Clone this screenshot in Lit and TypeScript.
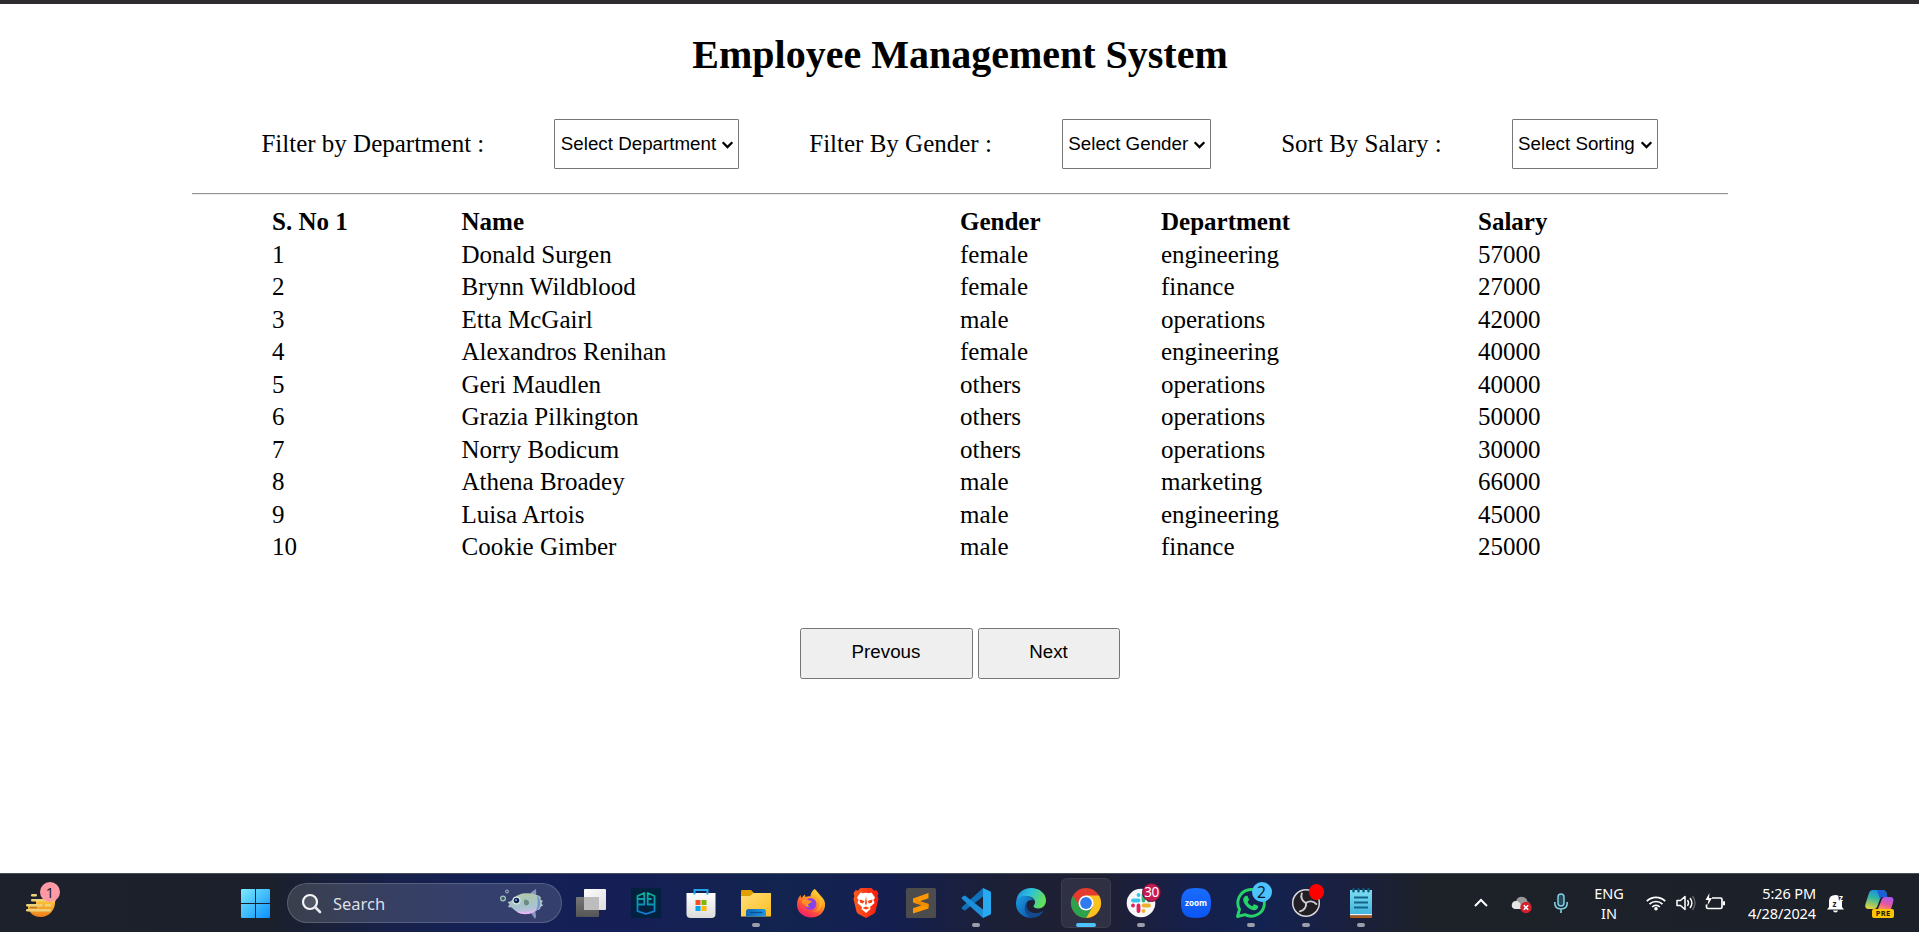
import { LitElement, html, svg, css, nothing, TemplateResult } from "lit";
import { customElement, property } from "lit/decorators.js";
import { classMap } from "lit/directives/class-map.js";

type Employee = [number, string, string, string, number];

const employees: Employee[] = [
  [1, "Donald Surgen", "female", "engineering", 57000],
  [2, "Brynn Wildblood", "female", "finance", 27000],
  [3, "Etta McGairl", "male", "operations", 42000],
  [4, "Alexandros Renihan", "female", "engineering", 40000],
  [5, "Geri Maudlen", "others", "operations", 40000],
  [6, "Grazia Pilkington", "others", "operations", 50000],
  [7, "Norry Bodicum", "others", "operations", 30000],
  [8, "Athena Broadey", "male", "marketing", 66000],
  [9, "Luisa Artois", "male", "engineering", 45000],
  [10, "Cookie Gimber", "male", "finance", 25000],
];

const icon = (content: TemplateResult, size = 30) =>
  html`<svg width=${size} height=${size} viewBox="0 0 ${size} ${size}">${content}</svg>`;

const icons = {
  taskView: svg`
    <defs><linearGradient id="tv" x2="0" y2="1"><stop stop-color="#777"/><stop offset="1" stop-color="#555"/></linearGradient>
    <linearGradient id="tw" x2="1" y2="1"><stop stop-color="#fff"/><stop offset="1" stop-color="#ddd"/></linearGradient></defs>
    <rect x="0" y="9" width="23" height="20" rx="1" fill="url(#tv)"/>
    <rect x="8" y="1" width="22" height="21" rx="1" fill="url(#tw)"/>
    <rect x="8" y="9" width="15" height="13" fill="#bdbdbd"/>`,
  pg: svg`
    <defs><linearGradient id="pg" gradientUnits="userSpaceOnUse" x1="0" y1="4" x2="0" y2="26"><stop stop-color="#0fb58f"/><stop offset=".55" stop-color="#0a94b4"/><stop offset="1" stop-color="#1279d8"/></linearGradient></defs>
    <rect width="30" height="30" fill="#02213f"/>
    <path d="M6.500 16.500V8L13.300 5v11.500H6.500v6.700L15 26l8.500-2.800V8L16.700 5v11.500h6.500M6.500 11h6.800M16.700 11h4" fill="none" stroke="url(#pg)" stroke-width="1.800" stroke-linejoin="round"/>`,
  store: svg`
    <defs><linearGradient id="st" x2="0" y2="1"><stop stop-color="#fff"/><stop offset="1" stop-color="#dcdcdc"/></linearGradient></defs>
    <path d="M.5 5h29v21q0 4-4 4h-21q-4 0-4-4z" fill="url(#st)"/>
    <path d="M8.500 6.500V2h13v4.500" fill="none" stroke="#22a5ea" stroke-width="2"/>
    <path d="M9.500 12H14.500V17H9.500z" fill="#f25022"/><path d="M15.500 12H20.500V17H15.500z" fill="#7fba00"/>
    <path d="M9.500 18H14.500V23H9.500z" fill="#00a4ef"/><path d="M15.500 18H20.500V23H15.500z" fill="#ffb900"/>`,
  folder: svg`
    <defs><linearGradient id="fo" x2="1" y2="1"><stop stop-color="#ffe07a"/><stop offset="1" stop-color="#fdbd22"/></linearGradient>
    <linearGradient id="fb" x2="1" y2="0"><stop stop-color="#0f66b8"/><stop offset="1" stop-color="#1e9be6"/></linearGradient></defs>
    <path d="M0 3q0-1 1-1h9l3 3v6H0z" fill="#e0a000"/>
    <path d="M0 8h9l3.500-3H30v23.500H0z" fill="url(#fo)"/>
    <path d="M5 28.500v-5q0-2.500 2.500-2.500h15q2.500 0 2.500 2.500v5z" fill="url(#fb)"/>
    <path d="M9 24.500H21.500" stroke="#0a4f92" stroke-width="1.300"/>`,
  firefox: svg`
    <defs><linearGradient id="ff" x1=".8" y1="0" x2=".2" y2="1"><stop stop-color="#ffe23c"/><stop offset=".4" stop-color="#ff9a22"/><stop offset=".7" stop-color="#ff4a3d"/><stop offset="1" stop-color="#ee1478"/></linearGradient>
    <radialGradient id="fp"><stop stop-color="#6b4bea"/><stop offset="1" stop-color="#a13be0"/></radialGradient></defs>
    <path d="M18.500 1c2 1 3.500 4 5.500 6 4 3.500 5.500 7 5 11-1 7-6.500 11.500-14 11.500C7 29.500 1 24 1 16.500c0-3 1-6.500 3.500-9.500l.8 3 3.400-3.500.8 2.600c1.500-.8 3.500-1 5-.6 0-3 1.500-5.500 4-7.500z" fill="url(#ff)"/>
    <circle cx="14.500" cy="16" r="6" fill="url(#fp)"/>
    <path d="M6 12c3-2 6-1 7 .5l3 .6c-.4 1.900-2.500 2-3.500 3-.6.800-.5 2 .8 2.600-2 .8-4-.2-5-2.200L6 15z" fill="#ff9127"/>
    <path d="M18 2c3 5 7 8 6 14-.5 4-3 7-7 8 9 0 11-11 6-16z" fill="#ffce31" opacity=".65"/>`,
  brave: svg`
    <defs><linearGradient id="br" x2="1" y2="0"><stop stop-color="#ff5a1f"/><stop offset="1" stop-color="#f51b0e"/></linearGradient></defs>
    <path d="M9.500 0h11l2.500 2.500 2.500-.3 2 3-.9 2.800.9 3-3 12.500q-.5 1.500-2 2.500L15 30l-7.500-4q-1.500-1-2-2.500L2.500 11l.9-3-.9-2.800 2-3 2.500.3z" fill="url(#br)"/>
    <path d="M9.500 4.500l2.500.7 3-.4 3 .4 2.500-.7 3.500 5-1.500 2.500 1 3-4.500 4 .5 2L15 25l-4.500-4 .5-2-4.500-4 1-3L6 9.500z" fill="#fff"/>
    <path d="M8.500 11.500l5 1.500-1.500 2.500-3-1zM21.500 11.500l-5 1.500 1.500 2.500 3-1zM15 8l1 7-1 2.500L14 15zM11.500 20l3.500-1.500 3.500 1.500-3.500 1.500z" fill="#f9400f"/>`,
  sublime: svg`
    <rect width="30" height="30" rx="1.500" fill="#4c4c4c"/>
    <path d="M7 10.500L22.500 5v5.200l-8.700 3.100 8.700 2.700v4.500L7 25.500v-5.200l8.700-3.100L7 14.500z" fill="#ff9800"/>
    <path d="M7 14.500l6.800-1.200 8.700 2.700v3.200z" fill="#ef8c00"/>`,
  vscode: svg`
    <path d="M22 0v8.500L4 22.500.8 21v-1.700z" fill="#0f72bb"/>
    <path d="M22 30v-8.500L4 7.500.8 9v1.700z" fill="#1d8fd8"/>
    <path d="M22 0l7 3.200c.6.300 1 .8 1 1.500v20.600c0 .7-.4 1.200-1 1.500L22 30z" fill="#29aaf0"/>`,
  edge: svg`
    <defs><linearGradient id="ea" x2="1" y2=".3"><stop stop-color="#1c8edb"/><stop offset=".5" stop-color="#2cc1dc"/><stop offset="1" stop-color="#64df5c"/></linearGradient>
    <linearGradient id="eb" x2="1" y2="1"><stop stop-color="#1b9de2"/><stop offset="1" stop-color="#0c4fa8"/></linearGradient></defs>
    <path d="M.3 13C1 5 7.500 0 15 0c8.500 0 15 5.500 15 12.500 0 5-3.500 8-7.800 8-3.200 0-4.700-1.200-4.700-2.200 0-1 1.500-1.500 1.500-4C19 11 16 8.500 11.500 8.500 6 8.500 2 11 .3 13z" fill="url(#ea)"/>
    <path d="M.3 13C2 9.500 6 7.500 10.500 8.300c3.500.6 6 2 7.500 4.200-5-2-9 2-8.500 7 .5 4.500 3.500 8 7.500 10C8 31 0 24.500 0 15.500 0 14.500.1 14 .3 13z" fill="url(#eb)"/>
    <path d="M11.500 14.500C9 19 12 24.500 18 25c4 .3 7-.8 9.500-2.600C26 26 22.500 29 18.500 29.600 12 30 8.500 25 8.700 20c.1-2.500 1.200-4.500 2.800-5.500z" fill="#124a8d"/>`,
  chrome: svg`
    <circle cx="15" cy="15" r="15" fill="#e33b2e"/>
    <path d="M15 7.500H28A15 15 0 0 1 15 30l6.500-11.250z" fill="#fcc31e"/>
    <path d="M8.500 18.750L2 7.500A15 15 0 0 0 15 30l6.500-11.250z" fill="#2ba24c"/>
    <circle cx="15" cy="15" r="7.500" fill="#fff"/><circle cx="15" cy="15" r="5.900" fill="#2f7bee"/>`,
  slack: svg`
    <circle cx="15" cy="15" r="14.300" fill="#f8f8f8"/>
    <g stroke-width="3.800" stroke-linecap="round" fill="none">
    <path d="M12.500 7v.01M7 12.500h5.500" stroke="#36c5f0"/><path d="M17.500 7v5.500M23 12.500v.01" stroke="#2eb67d"/>
    <path d="M17.500 17.500H23M17.500 23v.01" stroke="#ecb22e"/><path d="M12.500 17.500V23M7 17.500v.01" stroke="#e01e5a"/></g>`,
  zoom: svg`
    <defs><linearGradient id="zo" x2="0" y2="1"><stop stop-color="#1a6cff"/><stop offset="1" stop-color="#0b55f2"/></linearGradient></defs>
    <path d="M15 0C26 0 30 4 30 15s-4 15-15 15S0 26 0 15 4 0 15 0z" fill="url(#zo)"/>
    <text x="15" y="17.500" text-anchor="middle" class="zoom-word" textLength="22" lengthAdjust="spacingAndGlyphs">zoom</text>`,
  whatsapp: svg`
    <path d="M1.500 28.500l2-7.200A13.300 13.300 0 1 1 8.900 26.600z" fill="none" stroke="#25d366" stroke-width="2.900" stroke-linejoin="round"/>
    <path d="M10.600 7.800c.8 0 1 .2 1.300 1l1 2.400c.2.600 0 1-.4 1.500l-.9 1.200c1 2 2.600 3.400 4.700 4.300l1.300-1.500c.4-.5.8-.5 1.300-.3l2.500 1.200c.6.300.8.500.8 1 0 2-1.700 3.700-4 3.700-4.500 0-11-6-11-10.600 0-2.200 1.700-3.900 3.400-3.900z" fill="#25d366"/>`,
  obs: svg`
    <circle cx="15" cy="15" r="13.300" fill="#211f23" stroke="#d8d8da" stroke-width="1.500"/>
    <g fill="none" stroke="#cfcdd2" stroke-width="1.900" stroke-linecap="round">
    <path id="blade" d="M15 15C11.300 13.500 9.300 9.500 10.800 5.500"/>
    <path d="M15 15C11.300 13.500 9.300 9.500 10.800 5.500" transform="rotate(120 15 15)"/>
    <path d="M15 15C11.300 13.500 9.300 9.500 10.800 5.500" transform="rotate(240 15 15)"/></g>`,
  notepad: svg`
    <defs><linearGradient id="no" x2="0" y2="1"><stop stop-color="#7fdcf0"/><stop offset="1" stop-color="#3fb4dc"/></linearGradient></defs>
    <path d="M4 2h22v25H4z" fill="url(#no)"/><path d="M4 26h22v1.500H4z" fill="#f2f2f2"/><path d="M4 27.500h22V29q0 1-1 1H5q-1 0-1-1z" fill="#a75a1c"/>
    <path d="M7.500 1.300v2M12.500 1.300v2M17.500 1.300v2M22.500 1.300v2" stroke="#0d5a80" stroke-width="2.500" stroke-linecap="round"/>
    <path d="M8 9.500h14M8 14.500h14M8 19.500h14" stroke="#136488" stroke-width="1.900"/>`,
};

interface AppEntry { art: TemplateResult; state?: "open" | "active"; badge?: string; badgeClass?: string; }

const apps: AppEntry[] = [
  { art: icons.taskView },
  { art: icons.pg },
  { art: icons.store },
  { art: icons.folder, state: "open" },
  { art: icons.firefox },
  { art: icons.brave },
  { art: icons.sublime },
  { art: icons.vscode, state: "open" },
  { art: icons.edge },
  { art: icons.chrome, state: "active" },
  { art: icons.slack, state: "open", badge: "30", badgeClass: "crimson" },
  { art: icons.zoom },
  { art: icons.whatsapp, state: "open", badge: "2", badgeClass: "blue" },
  { art: icons.obs, state: "open", badge: "", badgeClass: "red" },
  { art: icons.notepad, state: "open" },
];

@customElement("filter-select")
class FilterSelect extends LitElement {
  @property() label = "";
  static styles = css`
    :host { display: block; position: relative; height: 50px; }
    select {
      appearance: none; display: block; box-sizing: border-box; width: 100%; height: 50px; margin: 0;
      padding: 0 0 1px 5.500px; border: 1px solid #767676; border-radius: 1px; background: #fff; color: #000;
      font: 18.75px "Liberation Sans", Arial, sans-serif;
    }
    svg { position: absolute; right: 5px; top: 21px; pointer-events: none; }
  `;
  render() {
    return html`<select><option>${this.label}</option></select>
      <svg width="13" height="10" viewBox="0 0 13 10"><path d="M1.700 2.200l4.800 4.900 4.800-4.900" fill="none" stroke="#000" stroke-width="2.200"/></svg>`;
  }
}

@customElement("employee-page")
class EmployeePage extends LitElement {
  static styles = css`
    :host { display: block; box-sizing: border-box; border-top: 4px solid #2f2c2f; padding-top: 27px;
      background: #fff; color: #000; font: 25px "Liberation Serif", "Times New Roman", serif; }
    h1 { margin: 0; padding-left: 1px; font-size: 40px; line-height: 48px; text-align: center; }
    .filters { display: flex; justify-content: space-evenly; align-items: center; width: 1536px; margin: 40px auto 0; height: 50px; }
    .filters span { line-height: 30px; white-space: nowrap; }
    .filters span:first-child { width: 223px; }
    .department { width: 185px; }
    .gender { width: 149.500px; }
    .sorting { width: 146px; }
    hr { width: 1536px; box-sizing: border-box; height: 2px; border: 0; border-top: 1px solid #949494; border-bottom: 1px solid #ececec; margin: 24px auto 0; }
    table { table-layout: fixed; border-collapse: collapse; width: 1376px; margin: 11px 0 0 272px; }
    th, td { padding: 0; height: 32.500px; line-height: 32px; text-align: left; vertical-align: top; }
    .c1 { width: 189.500px; } .c2 { width: 498.500px; } .c3 { width: 201px; } .c4 { width: 317px; } .c5 { width: 170px; }
    .pager { display: flex; justify-content: center; gap: 5px; margin-top: 64px; }
    button { box-sizing: border-box; height: 51px; padding: 0 0 2px; border: 1px solid #767676; border-radius: 2.500px;
      background: #efefef; color: #000; font: 18.75px "Liberation Sans", Arial, sans-serif; }
    .prev { width: 173px; } .next { width: 142px; }
  `;
  render() {
    return html`
      <h1>Employee Management System</h1>
      <div class="filters">
        <span>Filter by Department :</span><filter-select class="department" label="Select Department"></filter-select>
        <span>Filter By Gender :</span><filter-select class="gender" label="Select Gender"></filter-select>
        <span>Sort By Salary :</span><filter-select class="sorting" label="Select Sorting"></filter-select>
      </div>
      <hr />
      <table>
        <thead><tr><th class="c1">S. No 1</th><th class="c2">Name</th><th class="c3">Gender</th><th class="c4">Department</th><th class="c5">Salary</th></tr></thead>
        <tbody>${employees.map((row) => html`<tr>${row.map((cell) => html`<td>${cell}</td>`)}</tr>`)}</tbody>
      </table>
      <div class="pager"><button class="prev">Prevous</button><button class="next">Next</button></div>`;
  }
}

@customElement("task-bar")
class TaskBar extends LitElement {
  static styles = css`
    :host { display: flex; box-sizing: border-box; height: 59px; border-top: 1px solid #44505a; color: #fff;
      font-family: "Noto Sans", "Open Sans", sans-serif;
      background: linear-gradient(90deg, #1c212b 0, #1b202c 270px, #17214a 390px, #132057 500px, #161f55 640px, #12244f 780px, #141f52 880px, #1c2036 1000px, #1f1f33 1100px, #16204a 1190px, #122250 1260px, #1a2040 1340px, #1d2128 1430px, #1c2029 100%); }
    svg { display: block; overflow: visible; }
    .widget { position: relative; width: 215px; padding: 13px 0 0 26px; }
    .start { width: 30px; padding-top: 15px; }
    .search { display: flex; align-items: center; box-sizing: border-box; width: 275px; height: 40px; margin: 9px 0 0 16px;
      padding: 0 12px 0 14px; border: 1px solid rgba(255,255,255,.17); border-radius: 20px; background: rgba(255,255,255,.14);
      font-size: 16.500px; color: #dedfe6; }
    .search span { margin-left: 12px; flex: 1; line-height: 24px; padding-top: 1px; }
    .apps { display: flex; margin-left: 1.500px; }
    .app { position: relative; display: flex; justify-content: center; box-sizing: border-box; width: 55px; padding-top: 14px; height: 58px; }
    .app.active::before { content: ""; position: absolute; left: 2.500px; top: 4px; box-sizing: border-box; width: 50px; height: 50px; border-radius: 6px;
      background: rgba(255,255,255,.08); border: 1px solid rgba(255,255,255,.06); }
    .app svg { position: relative; }
    .app.open::after, .app.active::after { content: ""; position: absolute; bottom: 5px; width: 8px; height: 4px; border-radius: 2px; background: #9b9daa; }
    .app.active::after { width: 20px; background: #4cc2ff; }
    .badge { position: absolute; box-sizing: border-box; border-radius: 50%; text-align: center; }
    .crimson { left: 28.500px; top: 9px; width: 19px; height: 19px; background: #c71a53; border: 1px solid #641337; color: #fff; font-size: 13.500px; line-height: 17px; letter-spacing: -.5px; }
    .blue { left: 28px; top: 8px; width: 20px; height: 20px; background: #4cc2ff; color: #0b1a26; font-size: 15.500px; line-height: 20px; }
    .red { left: 30px; top: 10px; width: 15.500px; height: 15.500px; background: #f00; }
    .pink { left: 40px; top: 8px; width: 20px; height: 20px; background: #ff99a4; color: #1d1d24; font-size: 14.500px; line-height: 20px; }
    .zoom-word { fill: #fff; font: 700 8.500px "Open Sans", sans-serif; }
    .tray { display: grid; grid-template-columns: 40px 39px 41px 56px 38px 21px 38px 82px 39px 50px; margin-left: 72.500px; justify-items: center; align-items: center; height: 58px; }
    .tray div { font-size: 14.500px; line-height: 20px; text-align: center; white-space: nowrap; }
    .tray .clock { justify-self: end; text-align: right; font-size: 14.500px; letter-spacing: -.1px; }
    .pre { font: 700 7.500px "Noto Sans", sans-serif; fill: #211a00; letter-spacing: .3px; }
    .zz { font: 700 8px "Noto Sans", sans-serif; }
  `;

  private app(a: AppEntry) {
    return html`<div class=${classMap({ app: true, open: a.state === "open", active: a.state === "active" })}>
      ${icon(a.art)}${a.badge === undefined ? nothing : html`<span class="badge ${a.badgeClass}">${a.badge}</span>`}
    </div>`;
  }

  render() {
    return html`
      <div class="widget">
        ${icon(svg`
          <defs><linearGradient id="su" x2="0" y2="1"><stop stop-color="#ffc83a"/><stop offset="1" stop-color="#ee7d1c"/></linearGradient></defs>
          <path d="M10 13H29C30 23 23 30 14.500 30 9 30 4.500 27 2 22V19H10z" fill="url(#su)"/>
          <path d="M6.200 8.300H9.800M6.200 13.300H28.500M1.200 18.300H15.500M20 18.300H24M1.200 23.300H23.800" stroke="#edd27a" stroke-width="2.500" stroke-linecap="round"/>
          <path d="M4 20.500h7" stroke="#a9782e" stroke-width="1.300"/>`)}
        <span class="badge pink">1</span>
      </div>
      <div class="start">
        ${icon(svg`
          <defs><linearGradient id="wi" gradientUnits="userSpaceOnUse" x1="0" y1="0" x2="29" y2="29"><stop stop-color="#7bebff"/><stop offset="1" stop-color="#0a8ffb"/></linearGradient></defs>
          <path d="M0 1q0-1 1-1H14V14H0zM15 0h13q1 0 1 1V14H15zM0 15H14V29H1q-1 0-1-1zM15 15H29v13q0 1-1 1H15z" fill="url(#wi)"/>`)}
      </div>
      <div class="search">
        ${icon(svg`<circle cx="8" cy="8" r="7" fill="rgba(255,255,255,.12)" stroke="#f4f4f7" stroke-width="2.200"/><path d="M13 13l5 5" stroke="#e8e8ee" stroke-width="2.600" stroke-linecap="round"/>`, 19)}
        <span>Search</span>
        <svg width="50" height="34" viewBox="0 0 50 34">
          <defs><linearGradient id="fi" x2=".2" y2="1"><stop stop-color="#b3c8a6"/><stop offset=".7" stop-color="#a6c3cd"/><stop offset="1" stop-color="#c5bce6"/></linearGradient></defs>
          <path d="M30 9q3-4 7-6 1 4-1 8zM32 27l4 6q2-3 0-8z" fill="#8797bd"/>
          <path d="M8.500 16q4-.5 5.500-3c4-5 11-6.500 17-5.500 6 .5 9 2 11 4l-.5 2 2.500 1.500-1.500 2 1.500 2.500-2.500 1.500q0 2.500-3 3c-5 4-12 5-18 3-4-1.500-6-4-8-5.500L9 21l1.500-2.700z" fill="url(#fi)"/>
          <path d="M38 10q3 1 3 7t-4 8q3-7 1-15z" fill="#7093cc"/>
          <path d="M19 26q8 3 15-.5" stroke="#ecb5f3" stroke-width="1.500" fill="none"/>
          <circle cx="17.500" cy="14.500" r="4" fill="#d5e9e9"/><circle cx="17.500" cy="14.500" r="2.800" fill="#172247"/><circle cx="17" cy="14" r="1" fill="#5ab2e8"/>
          <path d="M25.500 13.500q5 0 4.500 4-2 3-4 1.500-2-1.500-.5-5.500z" fill="#6a8a82"/>
          <circle cx="4" cy="12.500" r="2.400" fill="#4c5a6c" stroke="#9fc5bd" stroke-width="1.200"/><circle cx="8" cy="5.500" r="1.500" fill="#4c5a6c" stroke="#9fb5c8"/>
        </svg>
      </div>
      <div class="apps">${apps.map((a) => this.app(a))}</div>
      <div class="tray">
        ${icon(svg`<path d="M4 13l6-6 6 6" fill="none" stroke="#fff" stroke-width="2"/>`, 20)}
        ${icon(svg`
          <path d="M4 16q-4-1-3-5 1-3 4-3 2-5 7-4 4 1 4.500 4.500 3 1 3 4.500-1 3-4 3z" fill="#969899"/>
          <path d="M4 16q-4-1-3-5 1-3 4-3 3 0 4.500 3l.5 5z" fill="#e6e6e6"/>
          <circle cx="15" cy="14.500" r="5.700" fill="#d3202c"/><path d="M12.800 12.300l4.400 4.400M17.200 12.300l-4.400 4.400" stroke="#fff" stroke-width="1.600"/>`, 20)}
        ${icon(svg`<rect x="7" y="1" width="6" height="12" rx="3" fill="#234a5a" stroke="#81cfe2" stroke-width="1.500"/><path d="M3.800 9v1q0 6 6.200 6t6.200-6V9M10 16v4" fill="none" stroke="#81cfe2" stroke-width="1.600"/>`, 20)}
        <div>ENG<br />IN</div>
        ${icon(svg`<g fill="none" stroke="#fff" stroke-width="1.700"><path d="M.8 8.200a13 13 0 0 1 18.400 0M3.500 11.200a9.200 9.200 0 0 1 13 0M6.200 14a5.400 5.400 0 0 1 7.600 0"/></g><circle cx="10" cy="15.800" r="1.800" fill="#fff"/>`, 20)}
        ${icon(svg`<path d="M1 7.500h3.500L9 3.500v13L4.500 12.500H1z" fill="none" stroke="#fff" stroke-width="1.500" stroke-linejoin="round"/><path d="M11.500 7.200q2 2.800 0 5.600M14 5q3.800 5 0 10" fill="none" stroke="#fff" stroke-width="1.400"/><path d="M16.500 3q5 7 0 14" fill="none" stroke="#62656c" stroke-width="1.300"/>`, 20)}
        ${icon(svg`<path d="M7 5h8.500q1.500 0 1.500 1.500v7.500q0 1.500-1.500 1.500H3Q1.500 15.500 1.500 14v-2.500" fill="none" stroke="#fff" stroke-width="1.700"/><path d="M19 8.300v4" stroke="#fff" stroke-width="2"/><path d="M4.500 0L.5 7h3l-1 5.500L7 5H4z" fill="#fff"/>`, 20)}
        <div class="clock">5:26 PM<br />4/28/2024</div>
        ${icon(svg`
          <path d="M3 14V8q0-6 6.500-6T16 8v6l2 2.500H1zM7 17.500h5q-.5 2-2.500 2t-2.500-2z" fill="#fff"/>
          <path d="M12 0h8v8h-7z" fill="#1c2029"/>
          <text x="6.500" y="13.500" class="zz" fill="#1c2029">z</text><text x="13" y="8" class="zz" fill="#fff">z</text>`, 20)}
        ${icon(svg`
          <defs><linearGradient id="ca" x1=".6" y1="0" x2=".3" y2="1"><stop stop-color="#1a8ce8"/><stop offset=".45" stop-color="#35b8a0"/><stop offset="1" stop-color="#e4d23e"/></linearGradient>
          <linearGradient id="cb" x1=".7" y1="0" x2=".3" y2="1"><stop stop-color="#a659f0"/><stop offset=".6" stop-color="#e65a9e"/><stop offset="1" stop-color="#ff8a58"/></linearGradient></defs>
          <path d="M8 2h10q2.500 0 3.300 2.500L22 8h-4q-2 0-3 3l-3 8q-.8 2-3 2H4q-5 0-3.500-5L4 5q1-3 4-3z" fill="url(#ca)"/>
          <path d="M12 2h6q2.500 0 3.300 2.500L22.500 9H18q-2 0-3 2z" fill="#1c5fd6"/>
          <path d="M20 9h5q4.500 0 3.200 5L26 21H13l3.500-9q1-3 3.500-3z" fill="url(#cb)"/>
          <rect x="7" y="21" width="22" height="9" rx="2" fill="#fdc400"/>
          <text x="18.200" y="28.300" text-anchor="middle" class="pre">PRE</text>`)}
      </div>`;
  }
}

@customElement("app-root")
class AppRoot extends LitElement {
  static styles = css`
    :host { display: flex; flex-direction: column; width: 1919px; height: 932px; overflow: hidden; background: #fff; }
    employee-page { flex: 1; }
    task-bar { flex: none; }
  `;
  render() {
    return html`<employee-page></employee-page><task-bar></task-bar>`;
  }
}
